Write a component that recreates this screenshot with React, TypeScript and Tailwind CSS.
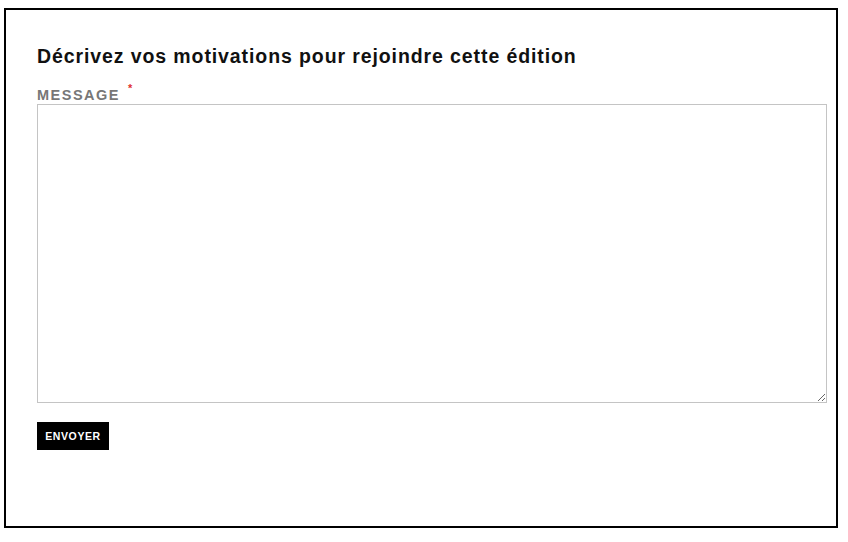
import React from 'react'

export default function App() {
  return (
    <div className="w-[848px] h-[542px] bg-white pl-[4px] pt-[8px]" style={{ fontFamily: '"Liberation Sans", Arial, sans-serif' }}>
      <form className="w-[834px] h-[520px] border-2 border-black flex flex-col pl-[31px] pr-[9px] pt-[35px]">
        <h2 className="text-[19.5px] leading-[22px] font-bold tracking-[0.9px] text-[#111]">
          Décrivez vos motivations pour rejoindre cette édition
        </h2>
        <label className="mt-[20px] flex items-start text-[14.5px] leading-[16px] font-bold uppercase tracking-[1.5px] text-[#777]">
          Message
          <span className="ml-[8px] -mt-[4px] text-[11px] leading-[11px] text-[#e0312e]">*</span>
        </label>
        <textarea className="mt-[1px] w-[790px] h-[299px] border border-[#c4c4c4] resize block" />
        <div className="mt-[19px]">
          <button
            type="button"
            className="bg-black text-white text-[10.5px] font-bold uppercase tracking-[0.6px] h-[28px] w-[72px] leading-none"
          >
            Envoyer
          </button>
        </div>
      </form>
    </div>
  )
}
